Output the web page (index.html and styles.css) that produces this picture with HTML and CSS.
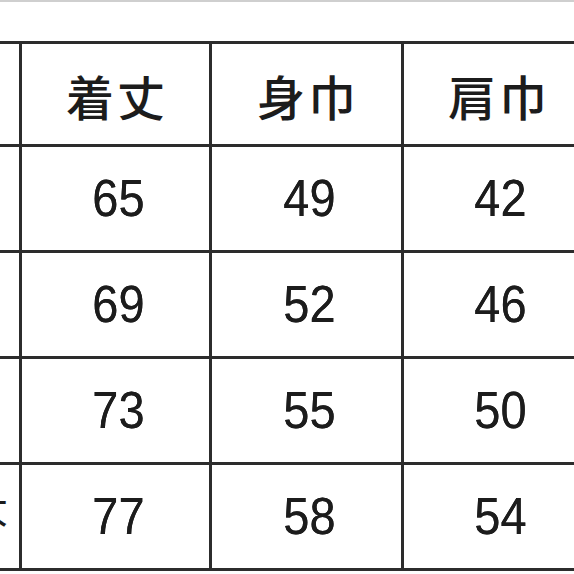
FILE: index.html
```html
<!DOCTYPE html>
<html lang="ja">
<head>
<meta charset="utf-8">
<title>サイズ表</title>
<link rel="stylesheet" href="styles.css">
</head>
<body>
<div class="page">
  <div class="sheet">
    <div class="size-table">
      <div class="cell label"></div>
      <div class="cell head">着丈</div>
      <div class="cell head">身巾</div>
      <div class="cell head">肩巾</div>
      <div class="cell head"></div>

      <div class="cell label"></div>
      <div class="cell num"><span>65</span></div>
      <div class="cell num"><span>49</span></div>
      <div class="cell num"><span>42</span></div>
      <div class="cell num"></div>

      <div class="cell label"></div>
      <div class="cell num"><span>69</span></div>
      <div class="cell num"><span>52</span></div>
      <div class="cell num"><span>46</span></div>
      <div class="cell num"></div>

      <div class="cell label"></div>
      <div class="cell num"><span>73</span></div>
      <div class="cell num"><span>55</span></div>
      <div class="cell num"><span>50</span></div>
      <div class="cell num"></div>

      <div class="cell label wide"><span>特大</span></div>
      <div class="cell num"><span>77</span></div>
      <div class="cell num"><span>58</span></div>
      <div class="cell num"><span>54</span></div>
      <div class="cell num"></div>
    </div>
  </div>
</div>
</body>
</html>
```
FILE: styles.css
```css
html, body {
  margin: 0;
  padding: 0;
  background: #ffffff;
}

body {
  width: 574px;
  height: 574px;
  overflow: hidden;
}

.page {
  border-top: 2px solid #cfcfcf;
  background: #fdfdfd;
  height: 572px;
  overflow: hidden;
}

.sheet {
  padding-top: 39px;
  background: #ffffff;
}

.size-table {
  display: grid;
  grid-template-columns: 83px 190px 192px 190px 190px;
  grid-template-rows: 103px 106px 106px 106px 106px;
  margin-left: -61px;
  width: max-content;
  border-top: 3px solid #2c2c2c;
}

.cell {
  box-sizing: border-box;
  border-right: 3px solid #2c2c2c;
  border-bottom: 3px solid #2c2c2c;
  display: flex;
  align-items: center;
  justify-content: center;
  overflow: hidden;
  white-space: nowrap;
  color: #1c1c1c;
}

.head {
  font-family: "Noto Sans CJK JP", "Noto Sans CJK SC", sans-serif;
  font-size: 48px;
  font-weight: 500;
  letter-spacing: 3px;
  padding-left: 3px;
  padding-top: 2px;
}

.num {
  font-family: "Liberation Sans", Arial, sans-serif;
  font-size: 47px;
  text-shadow: 0 0 0.6px #1c1c1c;
}

.num span {
  display: inline-block;
  transform: scaleY(1.12);
  padding-left: 6px;
  padding-bottom: 2px;
}

.label {
  font-family: "Noto Sans CJK JP", sans-serif;
  font-size: 40px;
}

.label.wide {
  justify-content: flex-end;
  padding-right: 11px;
  padding-bottom: 22px;
}
```
